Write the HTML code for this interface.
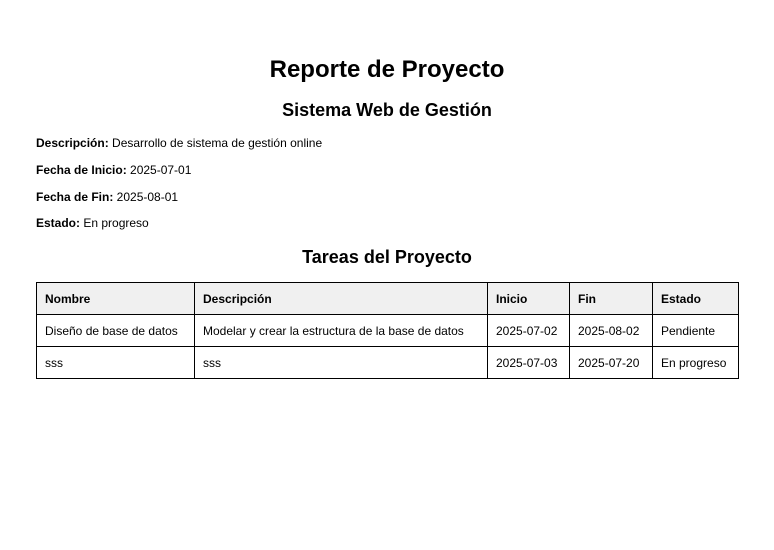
<!DOCTYPE html>
<html><head><meta charset="utf-8"><style>
body{margin:0;width:774px;height:550px;background:#fff;font-family:"Liberation Sans",sans-serif;color:#000;position:relative}
h1{position:absolute;left:0;width:774px;text-align:center;top:56px;margin:0;font-size:24px;font-weight:bold}
h2{position:absolute;left:0;width:774px;text-align:center;margin:0;font-size:18px;font-weight:bold}
p{position:absolute;left:36px;margin:0;font-size:12px}
table{position:absolute;left:36px;top:282px;width:703px;border-collapse:collapse;font-size:12px}
td,th{border:1px solid #000;padding:0 8px;text-align:left}
th{background:#f0f0f0;height:31px}
td{height:31px}
</style></head><body>
<h1>Reporte de Proyecto</h1>
<h2 style="top:100px">Sistema Web de Gestión</h2>
<p style="top:136px"><b>Descripción:</b> Desarrollo de sistema de gestión online</p>
<p style="top:163px"><b>Fecha de Inicio:</b> 2025-07-01</p>
<p style="top:190px"><b>Fecha de Fin:</b> 2025-08-01</p>
<p style="top:216px"><b>Estado:</b> En progreso</p>
<h2 style="top:247px">Tareas del Proyecto</h2>
<table>
<tr><th style="width:141px">Nombre</th><th style="width:276px">Descripción</th><th style="width:65px">Inicio</th><th style="width:66px">Fin</th><th>Estado</th></tr>
<tr><td style="height:30px">Diseño de base de datos</td><td>Modelar y crear la estructura de la base de datos</td><td>2025-07-02</td><td>2025-08-02</td><td>Pendiente</td></tr>
<tr><td style="height:30px">sss</td><td>sss</td><td>2025-07-03</td><td>2025-07-20</td><td>En progreso</td></tr>
</table>
</body></html>
